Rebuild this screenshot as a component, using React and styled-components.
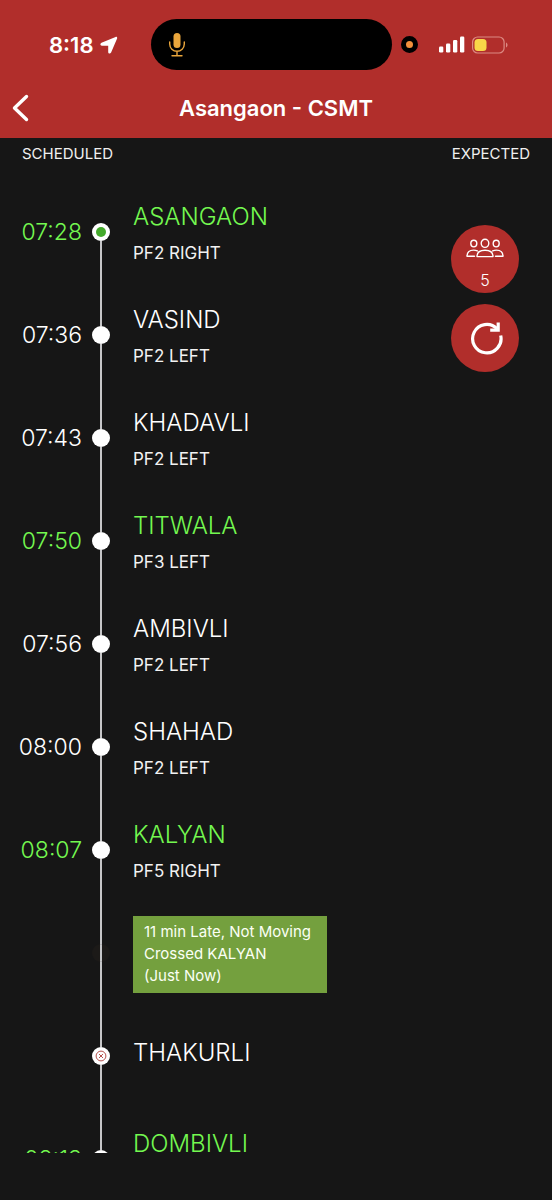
import styled, { createGlobalStyle } from "styled-components";

const GlobalStyle = createGlobalStyle`
  * {
    box-sizing: border-box;
  }

  body {
    margin: 0;
    background: #161616;
    color: #fff;
    font-family: Inter, "Liberation Sans", sans-serif;
  }

  button {
    border: 0;
    padding: 0;
    color: inherit;
    font-family: inherit;
    cursor: pointer;
  }
`;

const Screen = styled.div`
  position: relative;
  display: flex;
  flex-direction: column;
  height: 100vh;
  padding-bottom: 47px;
`;

const Header = styled.header`
  background: #b12e2b;
`;

const StatusBar = styled.div`
  display: grid;
  grid-template-columns: 1fr 241px 1fr;
  align-items: center;
  padding: 19px 10px 0 0;
`;

const Clock = styled.div`
  display: flex;
  align-items: center;
  justify-content: flex-end;
  gap: 6px;
  padding-right: 33px;
  font-size: 22px;
  font-weight: 600;
  line-height: 28px;
`;

const Island = styled.div`
  display: flex;
  align-items: center;
  height: 51px;
  padding-left: 17px;
  border-radius: 26px;
  background: #000;
`;

const Signals = styled.div`
  display: flex;
  align-items: center;
  padding-left: 9px;
`;

const Recording = styled.span`
  width: 17px;
  height: 17px;
  margin-right: 21px;
  border: 5px solid #000;
  border-radius: 50%;
  background: #f2903c;
`;

const NavBar = styled.div`
  display: grid;
  grid-template-columns: 48px 1fr 48px;
  align-items: center;
  height: 68px;
  padding-top: 8px;
`;

const BackButton = styled.button`
  display: flex;
  justify-content: flex-start;
  padding-left: 12px;
  background: none;
`;

const Title = styled.h1`
  margin: 0;
  font-size: 22px;
  font-weight: 600;
  line-height: 32px;
  text-align: center;
`;

const Columns = styled.div`
  display: flex;
  justify-content: space-between;
  padding: 4px 22px 14px;
  font-size: 15px;
  line-height: 24px;
  color: #f0f0f0;
`;

const Stops = styled.ol`
  flex: 1;
  min-height: 0;
  margin: 0;
  padding: 0;
  overflow-y: auto;
  scrollbar-width: none;
  list-style: none;
`;

const Stop = styled.li`
  display: grid;
  grid-template-columns: 82px 18px 1fr;
  column-gap: 10px;
  height: 103px;
  color: ${({ $fast }) => ($fast ? "#74f850" : "#fff")};
`;

const Time = styled.time`
  align-self: center;
  text-align: right;
  font-size: 23px;
  font-weight: 300;
  line-height: 32px;
`;

const Rail = styled.div`
  display: flex;
  flex-direction: column;
  align-items: center;
`;

const Segment = styled.span`
  flex: 1;
  width: 2px;
  background: ${({ $hidden }) => ($hidden ? "transparent" : "#c6c6c8")};
`;

const Dot = styled.span`
  display: flex;
  align-items: center;
  justify-content: center;
  width: 18px;
  height: 18px;
  border-radius: 50%;
  background: #fff;
`;

const CurrentMark = styled.span`
  width: 10px;
  height: 10px;
  border-radius: 50%;
  background: #44a92c;
`;

const TrainMark = styled(Dot)`
  background: linear-gradient(90deg, transparent 8px, #c6c6c8 8px 10px, transparent 10px) #1c1a18;
`;

const Details = styled.div`
  display: flex;
  flex-direction: column;
  align-items: flex-start;
  justify-content: center;
  padding: 3px 0 0 13px;
`;

const Name = styled.h2`
  margin: 0 0 8px;
  font-size: 24px;
  font-weight: 300;
  line-height: 32px;
`;

const Platform = styled.p`
  min-height: 24px;
  margin: 0;
  font-size: 17px;
  line-height: 24px;
  color: #f2f2f2;
`;

const Notice = styled.p`
  margin: 0;
  padding: 5px 16px 6px 11px;
  background: #74a03e;
  color: #fbfff5;
  font-size: 15px;
  line-height: 22px;
`;

const Actions = styled.div`
  position: absolute;
  top: 225px;
  right: 33px;
  display: flex;
  flex-direction: column;
  gap: 11px;
`;

const RoundButton = styled.button`
  display: flex;
  flex-direction: column;
  align-items: center;
  justify-content: center;
  width: 68px;
  height: 68px;
  border-radius: 50%;
  background: #b12e2b;
`;

const CrowdButton = styled(RoundButton)`
  gap: 12px;
  padding-top: 9px;
  font-size: 16px;
  font-weight: 300;
  line-height: 20px;
`;

const stops = [
  { time: "07:28", name: "ASANGAON", platform: "PF2 RIGHT", fast: true, mark: "current" },
  { time: "07:36", name: "VASIND", platform: "PF2 LEFT" },
  { time: "07:43", name: "KHADAVLI", platform: "PF2 LEFT" },
  { time: "07:50", name: "TITWALA", platform: "PF3 LEFT", fast: true },
  { time: "07:56", name: "AMBIVLI", platform: "PF2 LEFT" },
  { time: "08:00", name: "SHAHAD", platform: "PF2 LEFT" },
  { time: "08:07", name: "KALYAN", platform: "PF5 RIGHT", fast: true },
  { notice: ["11 min Late, Not Moving", "Crossed KALYAN", "(Just Now)"], mark: "train" },
  { name: "THAKURLI", mark: "skipped" },
  { time: "08:13", name: "DOMBIVLI", platform: "", fast: true },
];

const LocationIcon = () => (
  <svg width="18" height="18" viewBox="0 0 18 18" fill="#fff">
    <path d="M15.600.9 1.500 6.800C-.2 7.600.1 9.700 1.900 9.700h6.300v6.300c0 1.900 2.100 2.200 2.900.5L17.100 2.400c.4-1-.5-1.900-1.500-1.500Z" />
  </svg>
);

const MicIcon = () => (
  <svg width="18" height="26" viewBox="0 0 18 26" fill="none" stroke="#eaa63c" strokeWidth="1.4" strokeLinecap="round">
    <rect x="5.5" y="1" width="7" height="15" rx="3.5" fill="#eaa63c" stroke="none" />
    <path d="M1.7 10v2a7.3 7.3 0 0 0 14.6 0v-2M9 19.3v4M4 23.7h10" />
  </svg>
);

const SignalIcon = () => (
  <svg width="26" height="17" viewBox="0 0 26 17" fill="#fff">
    <rect x="0" y="10.5" width="4.3" height="6" rx="1.2" />
    <rect x="7" y="7.5" width="4.3" height="9" rx="1.2" />
    <rect x="14" y="4" width="4.3" height="12.5" rx="1.2" />
    <rect x="21" y="0.5" width="4.3" height="16" rx="1.2" />
  </svg>
);

const BatteryIcon = () => (
  <svg width="44" height="18" viewBox="0 0 44 18">
    <rect x="7.6" y="1" width="31.5" height="16" rx="5" fill="none" stroke="#dc8a83" strokeWidth="1.2" />
    <rect x="9.5" y="3" width="12" height="12" rx="3.5" fill="#f9d648" />
    <path d="M41 6.5c2 .8 2 4.2 0 5Z" fill="#dc8a83" />
  </svg>
);

const BackIcon = () => (
  <svg width="18" height="28" viewBox="0 0 18 28" fill="none" stroke="#fff" strokeWidth="3.4" strokeLinecap="round" strokeLinejoin="round">
    <path d="M14.5 2.5 2.5 14l12 11.5" />
  </svg>
);

const CrowdIcon = () => (
  <svg width="38" height="20" viewBox="0 0 38 20" fill="none" stroke="#fff" strokeWidth="1.4" strokeLinejoin="round" strokeLinecap="round">
    <ellipse cx="19" cy="5.3" rx="3.8" ry="4.1" />
    <path d="M11 18.6c0-4.1 3.3-6.3 8-6.3s8 2.2 8 6.3Z" />
    <ellipse cx="7.8" cy="5.6" rx="3" ry="3.3" />
    <ellipse cx="30.2" cy="5.6" rx="3" ry="3.3" />
    <path d="M8.5 18.3H1c0-4 2.7-6.2 6.6-6.2 1.500 0 2.700.3 3.700.8M29.5 18.300H37c0-4-2.700-6.200-6.600-6.200-1.500 0-2.700.3-3.700.8" />
  </svg>
);

const RefreshIcon = () => (
  <svg width="36" height="36" viewBox="0 0 36 36" fill="none" stroke="#fff" strokeWidth="3.2">
    <path d="M33.700 15.500A14.200 14.200 0 1 1 30 8.700" />
    <path d="M31.200 2.500v7.600h-8" />
  </svg>
);

const SkippedIcon = () => (
  <svg width="12" height="12" viewBox="0 0 12 12" fill="none" stroke="#b5504d" strokeWidth="1">
    <circle cx="6" cy="6" r="4.9" />
    <path d="m4 4 4 4M8 4 4 8" />
  </svg>
);

const Marker = ({ mark }) => {
  if (mark === "train") return <TrainMark />;
  return (
    <Dot>
      {mark === "current" && <CurrentMark />}
      {mark === "skipped" && <SkippedIcon />}
    </Dot>
  );
};

const StopRow = ({ stop, first }) => (
  <Stop $fast={stop.fast}>
    {stop.time ? <Time>{stop.time}</Time> : <span />}
    <Rail>
      <Segment $hidden={first} />
      <Marker mark={stop.mark} />
      <Segment />
    </Rail>
    <Details>
      {stop.name && <Name>{stop.name}</Name>}
      {stop.platform !== undefined && <Platform>{stop.platform}</Platform>}
      {stop.notice && (
        <Notice>
          {stop.notice.map((line) => (
            <span key={line}>
              {line}
              <br />
            </span>
          ))}
        </Notice>
      )}
    </Details>
  </Stop>
);

const App = () => (
  <>
    <GlobalStyle />
    <Screen>
      <Header>
        <StatusBar>
          <Clock>
            8:18
            <LocationIcon />
          </Clock>
          <Island>
            <MicIcon />
          </Island>
          <Signals>
            <Recording />
            <SignalIcon />
            <BatteryIcon />
          </Signals>
        </StatusBar>
        <NavBar>
          <BackButton type="button" aria-label="Back">
            <BackIcon />
          </BackButton>
          <Title>Asangaon - CSMT</Title>
        </NavBar>
      </Header>
      <Columns>
        <span>SCHEDULED</span>
        <span>EXPECTED</span>
      </Columns>
      <Stops>
        {stops.map((stop, i) => (
          <StopRow key={stop.name || "train"} stop={stop} first={i === 0} />
        ))}
      </Stops>
      <Actions>
        <CrowdButton type="button" aria-label="Crowd level 5">
          <CrowdIcon />
          <span>5</span>
        </CrowdButton>
        <RoundButton type="button" aria-label="Refresh">
          <RefreshIcon />
        </RoundButton>
      </Actions>
    </Screen>
  </>
);

export default App;
